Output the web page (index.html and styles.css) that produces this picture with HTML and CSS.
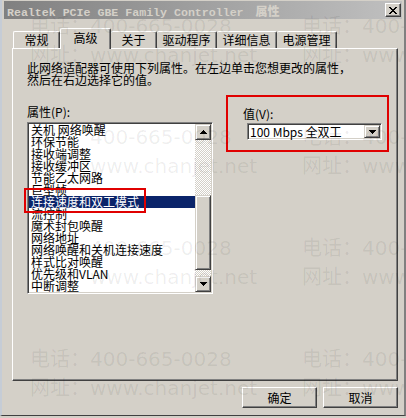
FILE: index.html
```html
<!DOCTYPE html>
<html lang="zh-CN">
<head>
  <meta charset="UTF-8">
  <title>Realtek PCIe GBE Family Controller 属性</title>
  <link rel="stylesheet" href="styles.css">
</head>
<body>
  <div class="ventana">
    <div class="titulo">
      <span class="titulo-texto">Realtek PCIe GBE Family Controller <b>属性</b></span>
      <span class="cerrar">
        <svg width="8" height="7" viewBox="0 0 8 7" shape-rendering="crispEdges"><path d="M0 0h2v1h1v1h2V1h1V0h2v1H7v1H6v1H5v1h1v1h1v1h1v1H6V6H5V5H3v1H2v1H0V6h1V5h1V4h1V3H2V2H1V1H0z"/></svg>
      </span>
    </div>

    <div class="pestanas">
      <div class="pestana p-general">常规</div>
      <div class="pestana activa">高级</div>
      <div class="pestana p-acerca">关于</div>
      <div class="pestana p-ancha">驱动程序</div>
      <div class="pestana p-ancha">详细信息</div>
      <div class="pestana p-ancha">电源管理</div>
    </div>

    <div class="panel">
      <p class="descripcion">此网络适配器可使用下列属性。在左边单击您想更改的属性，<br>然后在右边选择它的值。</p>

      <div class="columnas">
        <div class="col-propiedad">
          <div class="etiqueta">属性(<u>P</u>):</div>
          <div class="lista">
            <ul class="items">
              <li>关机 网络唤醒</li>
              <li>环保节能</li>
              <li>接收端调整</li>
              <li>接收缓冲区</li>
              <li>节能乙太网路</li>
              <li>巨型帧</li>
              <li class="elegido">连接速度和双工模式</li>
              <li>流控制</li>
              <li>魔术封包唤醒</li>
              <li>网络地址</li>
              <li>网络唤醒和关机连接速度</li>
              <li>样式比对唤醒</li>
              <li>优先级和VLAN</li>
              <li>中断调整</li>
            </ul>
            <div class="scroll">
              <div class="boton-3d flecha">
                <svg width="7" height="4" viewBox="0 0 7 4" shape-rendering="crispEdges"><path d="M3 0h1v1h1v1h1v1h1v1H0V3h1V2h1V1h1z"/></svg>
              </div>
              <div class="pista">
                <div class="boton-3d pulgar"></div>
              </div>
              <div class="boton-3d flecha">
                <svg width="7" height="4" viewBox="0 0 7 4" shape-rendering="crispEdges"><path d="M0 0h7v1H6v1H5v1H4v1H3V3H2V2H1V1H0z"/></svg>
              </div>
            </div>
          </div>
          <div class="marco-rojo marco-item"></div>
        </div>

        <div class="col-valor marco-rojo">
          <div class="etiqueta">值(<u>V</u>):</div>
          <div class="combo">
            <span class="combo-texto">100 Mbps 全双工</span>
            <div class="boton-3d combo-boton">
              <svg width="7" height="4" viewBox="0 0 7 4" shape-rendering="crispEdges"><path d="M0 0h7v1H6v1H5v1H4v1H3V3H2V2H1V1H0z"/></svg>
            </div>
          </div>
        </div>
      </div>
    </div>

    <div class="botones">
      <button class="boton">确定</button>
      <button class="boton">取消</button>
    </div>

    <!-- marca de agua encima de todo -->
    <div class="marca">
      <div class="sello s1">电话：400-665-0028<br>网址：www.chanjet.net</div>
      <div class="sello s2">电话：400-665-0028<br>网址：www.chanjet.net</div>
      <div class="sello s3">电话：400-665-0028<br>网址：www.chanjet.net</div>
      <div class="sello s4">电话：400-665-0028<br>网址：www.chanjet.net</div>
      <div class="sello s5">电话：400-665-0028<br>网址：www.chanjet.net</div>
      <div class="sello s6">电话：400-665-0028<br>网址：www.chanjet.net</div>
      <div class="sello s7">电话：400-665-0028<br>网址：www.chanjet.net</div>
      <div class="sello s8">电话：400-665-0028<br>网址：www.chanjet.net</div>
    </div>
  </div>
</body>
</html>
```

FILE: styles.css
```css
body {
  margin: 0;
  background: #d4d0c8;
  font-family: "Noto Sans CJK SC", sans-serif;
  font-size: 12px;
  color: #000;
}

.ventana {
  position: relative;
  width: 406px;
  height: 416px;
  box-sizing: border-box;
  padding-top: 1px;
  background: #d4d0c8;
  border-left: 2px solid #c5ccd6;
  border-right: 2px solid #808080;
  border-bottom: 1px solid #404040;
  overflow: hidden;
}

/* barra de titulo (ventana inactiva) */
.titulo {
  display: flex;
  align-items: center;
  justify-content: space-between;
  height: 18px;
  margin: 0 2px 0 2px;
  padding: 0 1px 0 3px;
  background: linear-gradient(to right, #808080, #c0c0c0);
}

.titulo-texto {
  font-family: "Liberation Mono", monospace;
  font-weight: bold;
  font-size: 11.6px;
  color: #d4d0c8;
  white-space: nowrap;
}

.titulo-texto b {
  margin-left: 5px;
  font-family: "Noto Sans CJK SC", sans-serif;
  font-size: 12px;
}

.cerrar {
  display: flex;
  align-items: center;
  justify-content: center;
  width: 14px;
  height: 12px;
  background: #d4d0c8;
  border: 1px solid;
  border-color: #fff #404040 #404040 #fff;
  box-shadow: inset -1px -1px #808080;
}

/* pestañas */
.pestanas {
  display: flex;
  align-items: flex-end;
  height: 20px;
  margin: 9px 0 0 11px;
}

.pestana {
  box-sizing: border-box;
  height: 17px;
  line-height: 15px;
  text-align: center;
  border-top: 1px solid #fff;
  border-left: 1px solid #fff;
  border-right: 1px solid #404040;
  box-shadow: inset -1px 0 #808080;
  border-radius: 2px 2px 0 0;
}

.p-general { width: 47px; }
.p-acerca { width: 46px; border-left: none; }
.p-ancha { width: 60px; border-left: none; }

.pestana.activa {
  position: relative;
  z-index: 1;
  width: 51px;
  height: 21px;
  margin-bottom: -1px;
  line-height: 17px;
  background: #d4d0c8;
}

/* panel */
.panel {
  box-sizing: border-box;
  width: 386px;
  height: 333px;
  margin-left: 10px;
  padding: 13px 0 0 14px;
  border-top: 1px solid #fff;
  border-left: 1px solid #fff;
  border-right: 1px solid #404040;
  border-bottom: 1px solid #404040;
  box-shadow: inset -1px -1px #808080;
}

.descripcion {
  margin: 0 0 9px;
  line-height: 12px;
}

.columnas {
  display: flex;
  gap: 13px;
  align-items: flex-start;
}

.col-propiedad {
  position: relative;
  width: 186px;
  padding-top: 11px;
}

.etiqueta {
  line-height: 12px;
  margin-bottom: 4px;
}

.etiqueta u {
  text-decoration: none;
}

.lista {
  display: flex;
  box-sizing: border-box;
  height: 172px;
  background: #fff;
  border: 1px solid;
  border-color: #808080 #fff #fff #808080;
  box-shadow: inset 1px 1px #404040, inset -1px -1px #d4d0c8;
  padding: 1px;
}

.items {
  flex: 1;
  list-style: none;
  margin: 0;
  padding: 0;
  overflow: hidden;
}

.items li {
  height: 12px;
  line-height: 12px;
  padding-left: 2px;
  white-space: nowrap;
}

.items li.elegido {
  background: #0a246a;
  color: #fff;
}

.scroll {
  display: flex;
  flex-direction: column;
  width: 16px;
}

.boton-3d {
  box-sizing: border-box;
  background: #d4d0c8;
  border: 1px solid;
  border-color: #d4d0c8 #404040 #404040 #d4d0c8;
  box-shadow: inset 1px 1px #fff, inset -1px -1px #808080;
}

.flecha {
  display: flex;
  align-items: center;
  justify-content: center;
  height: 16px;
}

.pista {
  flex: 1;
  background: repeating-conic-gradient(#fff 0 25%, #d4d0c8 0 50%) 0 0 / 2px 2px;
}

.pulgar {
  height: 75px;
  margin-top: 55px;
}

.marco-rojo {
  border: 2px solid #e00000;
}

.marco-item {
  position: absolute;
  left: -3px;
  top: 93px;
  width: 118px;
  height: 21px;
}

.col-valor {
  width: 163px;
  box-sizing: border-box;
  padding: 11px 5px 10px 15px;
}

.col-valor .etiqueta {
  margin-bottom: 3px;
}

.combo {
  display: flex;
  align-items: center;
  box-sizing: border-box;
  width: 135px;
  height: 17px;
  margin-left: 4px;
  background: #fff;
  border: 1px solid;
  border-color: #808080 #fff #fff #808080;
  box-shadow: inset 1px 1px #404040, inset -1px -1px #d4d0c8;
  padding: 1px;
}

.combo-texto {
  flex: 1;
  padding-left: 1px;
  line-height: 13px;
}

.combo-boton {
  display: flex;
  align-items: center;
  justify-content: center;
  width: 16px;
  height: 13px;
}

/* botones de abajo */
.botones {
  display: flex;
  justify-content: flex-end;
  gap: 6px;
  margin: 6px 6px 0 0;
}

.boton {
  box-sizing: border-box;
  width: 75px;
  height: 21px;
  padding: 0;
  font-family: "Noto Sans CJK SC", sans-serif;
  font-size: 12px;
  color: #000;
  background: #d4d0c8;
  border: 1px solid;
  border-color: #fff #404040 #404040 #fff;
  box-shadow: inset -1px -1px #808080;
}

/* marca de agua */
.marca {
  position: absolute;
  inset: 0;
  pointer-events: none;
  z-index: 5;
}

.sello {
  position: absolute;
  font-family: "DejaVu Sans", "Noto Sans CJK SC", sans-serif;
  font-size: 20px;
  line-height: 29px;
  color: rgba(0, 0, 0, 0.07);
  white-space: nowrap;
}

.s1 { left: 28px; top: 12px; }
.s2 { left: 300px; top: 12px; }
.s3 { left: 28px; top: 123px; }
.s4 { left: 300px; top: 123px; }
.s5 { left: 28px; top: 234px; }
.s6 { left: 300px; top: 234px; }
.s7 { left: 28px; top: 345px; }
.s8 { left: 300px; top: 345px; }
```
